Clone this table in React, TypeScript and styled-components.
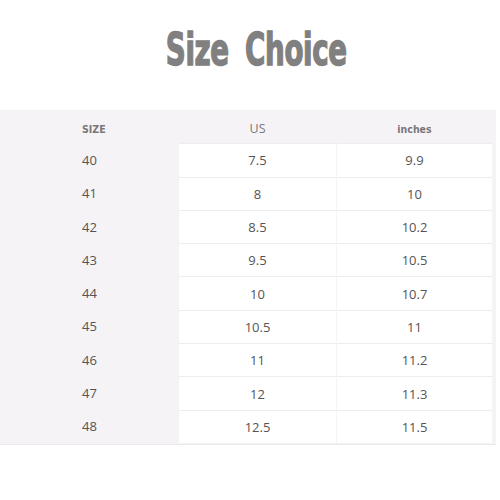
import React from "react";
import styled, { createGlobalStyle } from "styled-components";

const GlobalStyle = createGlobalStyle`
  html, body {
    margin: 0;
    padding: 0;
    background: #ffffff;
  }
`;

const Page = styled.div`
  width: 500px;
  height: 500px;
  background: #ffffff;
  font-family: "Open Sans", "Noto Sans", sans-serif;
`;

const TitleBar = styled.div`
  height: 110px;
  display: flex;
  justify-content: center;
  align-items: flex-start;
  padding-left: 13px;
  box-sizing: border-box;
`;

const Title = styled.h1`
  margin: 25px 0 0;
  font-family: "DejaVu Sans Condensed", "DejaVu Sans", sans-serif;
  font-weight: bold;
  font-size: 44px;
  line-height: 50px;
  color: #808080;
  -webkit-text-stroke: 1.4px #808080;
  word-spacing: 10px;
  letter-spacing: -0.5px;
  transform: scaleX(0.7);
`;

const Panel = styled.div`
  width: 496px;
  background: #f6f3f6;
  padding-bottom: 1px;
  box-shadow: 0 1px 0 #ebe8eb;
`;

const Grid = styled.div`
  display: grid;
  grid-template-columns: 178px 157px 155px;
  grid-auto-rows: 33.3px;
  column-gap: 1px;
`;

const HeadCell = styled.div<{ $left?: boolean; $condensed?: boolean }>`
  height: 32px;
  padding-top: 5px;
  box-sizing: border-box;
  display: flex;
  align-items: center;
  justify-content: ${(p) => (p.$left ? "flex-start" : "center")};
  padding-left: ${(p) => (p.$left ? "82px" : "0")};
  font-family: ${(p) =>
    p.$condensed ? '"DejaVu Sans Condensed", "DejaVu Sans", sans-serif' : '"Open Sans", sans-serif'};
  font-weight: ${(p) => (p.$condensed ? "bold" : "normal")};
  font-size: ${(p) => (p.$condensed ? "10.5px" : "12.5px")};
  color: #7a777a;
`;

const SizeCell = styled.div`
  display: flex;
  align-items: center;
  padding-left: 82px;
  font-size: 13px;
  color: #555355;
`;

const ValueCell = styled.div`
  display: flex;
  align-items: center;
  justify-content: center;
  background: #ffffff;
  border-top: 1px solid #efecef;
  font-size: 13px;
  color: #555355;
`;

const rows: [string, string, string][] = [
  ["40", "7.5", "9.9"],
  ["41", "8", "10"],
  ["42", "8.5", "10.2"],
  ["43", "9.5", "10.5"],
  ["44", "10", "10.7"],
  ["45", "10.5", "11"],
  ["46", "11", "11.2"],
  ["47", "12", "11.3"],
  ["48", "12.5", "11.5"],
];

export default function App() {
  return (
    <Page>
      <GlobalStyle />
      <TitleBar>
        <Title>Size Choice</Title>
      </TitleBar>
      <Panel>
        <Grid>
          <HeadCell $left $condensed>SIZE</HeadCell>
          <HeadCell>US</HeadCell>
          <HeadCell $condensed>inches</HeadCell>
          {rows.map(([size, us, inches]) => (
            <React.Fragment key={size}>
              <SizeCell>{size}</SizeCell>
              <ValueCell>{us}</ValueCell>
              <ValueCell>{inches}</ValueCell>
            </React.Fragment>
          ))}
        </Grid>
      </Panel>
    </Page>
  );
}
